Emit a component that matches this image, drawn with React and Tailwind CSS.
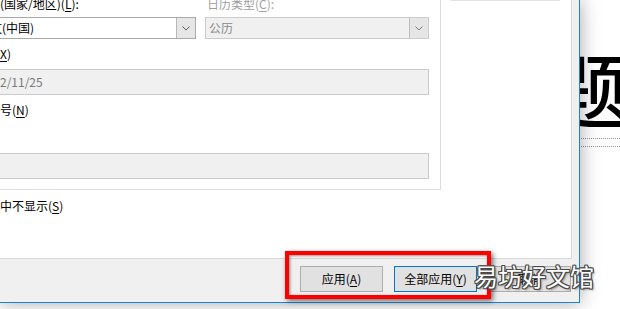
const Chevron = ({ color = "#5f5f5f" }) => (
  <svg width="8" height="5" viewBox="0 0 8 5">
    <path d="M0.5 0.5 L4 4 L7.5 0.5" fill="none" stroke={color} strokeWidth="1" />
  </svg>
);

const Key = ({ children }) => (
  <u className="underline underline-offset-2 decoration-1">{children}</u>
);

const outline =
  "[text-shadow:1px_0_#4a4a4a,-1px_0_#4a4a4a,0_1px_#4a4a4a,0_-1px_#4a4a4a,1px_1px_#4a4a4a,-1px_-1px_#4a4a4a,1px_-1px_#4a4a4a,-1px_1px_#4a4a4a,2px_2px_2px_rgba(0,0,0,0.35)]";

export default function App() {
  return (
    <div className="relative w-[620px] h-[309px] overflow-hidden bg-white flex font-['Noto_Sans_CJK_SC',sans-serif] text-[12px] text-black">
      {/* Dialog */}
      <div className="relative z-10 w-[580px] h-[303px] shrink-0 flex flex-col bg-[#f0f0f0] border-r border-b border-[#1883d7] shadow-[0_0_18px_rgba(0,0,0,0.35)]">
        {/* Tab page */}
        <div className="h-[259px] mr-[7px] bg-white border-r border-b border-[#d9d9d9] flex">
          <div className="flex flex-col">
            {/* Group box */}
            <div className="w-[441px] h-[190px] border-r border-b border-[#dcdcdc] flex flex-col">
              <div className="-mt-[4px] h-[16px] leading-[16px] flex whitespace-nowrap">
                <span className="-ml-[24px] w-[231px]">
                  语言(国家/地区)(<Key>L</Key>):
                </span>
                <span className="text-[#a0a0a0]">
                  日历类型(<Key>C</Key>):
                </span>
              </div>

              <div className="mt-[5px] flex">
                <div className="-ml-[26px] w-[222px] h-[22px] flex bg-white border border-[#a9a9a9]">
                  <span className="flex-1 pl-[3px] leading-[20px] whitespace-nowrap">中文(中国)</span>
                  <span className="w-[19px] h-full flex items-center justify-center bg-[#e6e6e6] border-l border-[#b9b9b9]">
                    <Chevron />
                  </span>
                </div>
                <div className="ml-[9px] w-[224px] h-[22px] flex bg-[#f0f0f0] border border-[#cccccc]">
                  <span className="flex-1 pl-[3px] leading-[20px] text-[#8a8a8a]">公历</span>
                  <span className="w-[19px] h-full flex items-center justify-center bg-[#e6e6e6] border-l border-[#bcbcbc]">
                    <Chevron color="#7a7a7a" />
                  </span>
                </div>
              </div>

              <div className="mt-[7px] -ml-[28px] h-[16px] leading-[16px] whitespace-nowrap">
                固定(<Key>X</Key>)
              </div>

              <div className="mt-[7px] -ml-[24px] w-[453px] h-[26px] bg-[#f0f0f0] border border-[#cccccc] pl-[3px] leading-[24px] text-[#7a7a7a]">
                2022/11/25
              </div>

              <div className="mt-[7px] -ml-[48px] h-[16px] leading-[16px] whitespace-nowrap">
                幻灯片编号(<Key>N</Key>)
              </div>

              <div className="mt-[35px] -ml-[24px] w-[453px] h-[26px] bg-[#f0f0f0] border border-[#cccccc]" />
            </div>

            <div className="mt-[8px] -ml-[60px] h-[16px] leading-[16px] whitespace-nowrap">
              标题幻灯片中不显示(<Key>S</Key>)
            </div>
          </div>

          {/* Preview column */}
          <div className="ml-[9px] w-[110px] h-px bg-[#e2e2e2]" />
        </div>

        {/* Footer buttons */}
        <div className="flex-1 flex justify-end items-start gap-[11px] pt-[7px] pr-[8px]">
          <button className="w-[83px] h-[26px] bg-[#e1e1e1] border border-[#adadad] leading-[24px]">
            应用(<Key>A</Key>)
          </button>
          <button className="w-[83px] h-[26px] bg-[#e1e1e1] border border-[#0078d7] leading-[24px]">
            全部应用(<Key>Y</Key>)
          </button>
          <button className="w-[83px] h-[26px] bg-[#e1e1e1] border border-[#adadad] leading-[24px]">
            取消
          </button>
        </div>
      </div>

      {/* Slide behind the dialog */}
      <div className="flex-1 flex flex-col bg-white">
        <div className="-ml-[32px] mt-[46px] text-[80px] font-medium leading-none whitespace-nowrap">题</div>
        <div className="-ml-[40px] mt-[12px] border-t border-dotted border-[#9a9a9a]" />
        <div className="-ml-[40px] mt-[7px] border-t border-dotted border-[#9a9a9a]" />
      </div>

      {/* Red highlight */}
      <div className="absolute z-20 left-[285px] top-[251px] w-[206px] h-[48px] border-4 border-[#ff0000] shadow-[2px_2px_5px_rgba(0,0,0,0.55),inset_1px_1px_3px_rgba(0,0,0,0.45)]" />

      {/* Watermark */}
      <div className={`absolute z-30 left-[474px] top-[260px] text-[24px] leading-[32px] text-white whitespace-nowrap ${outline}`}>
        易坊好文馆
      </div>
    </div>
  );
}
